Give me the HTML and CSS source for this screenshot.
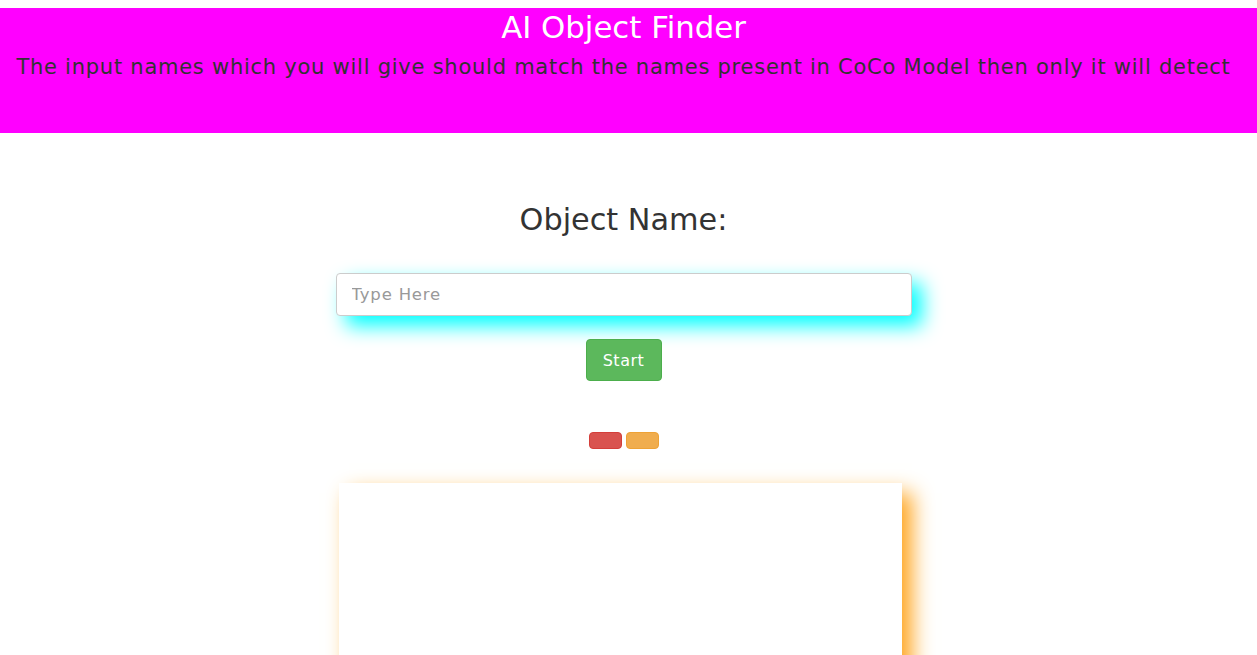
FILE: index.html
```html
<!DOCTYPE html>
<html>
<head>
<meta charset="utf-8">
<title>AI Object Finder</title>
<link rel="stylesheet" href="styles.css">
</head>
<body>
<header class="banner">
  <h1 class="banner-title">AI Object Finder</h1>
  <p class="banner-sub">The input names which you will give should match the names present in CoCo Model then only it will detect</p>
</header>
<main class="main">
  <h2 class="label">Object Name:</h2>
  <input class="name-input" type="text" placeholder="Type Here">
  <button class="btn-start">Start</button>
  <div class="mini-row">
    <button class="mini mini-red"></button>
    <button class="mini mini-orange"></button>
  </div>
  <div class="canvas"></div>
</main>
</body>
</html>
```
FILE: styles.css
```css
html, body {
  overflow: hidden;
}
body {
  margin: 8px 0 0;
  font-family: "DejaVu Sans", "Open Sans", sans-serif;
  background: #fff;
  color: #333;
}
.banner {
  background: #ff00ff;
  height: 125px;
  box-sizing: border-box;
  padding: 2px 10px 0 0;
  text-align: center;
}
.banner-title {
  margin: 0;
  font-size: 30.8px;
  font-weight: 400;
  line-height: 34px;
  color: #fff;
}
.banner-sub {
  margin: 10px 0 0;
  font-size: 21px;
  letter-spacing: 0.75px;
  line-height: 26px;
  color: #333;
  white-space: nowrap;
}
.main {
  display: flex;
  flex-direction: column;
  align-items: center;
  padding-right: 10px;
}
.label {
  margin: 69px 0 0;
  font-size: 30.3px;
  font-weight: 400;
  line-height: 36px;
  color: #333;
}
.name-input {
  margin-top: 35px;
  width: 576px;
  height: 43px;
  box-sizing: border-box;
  padding: 6px 15px;
  font-family: inherit;
  font-size: 16.5px;
  letter-spacing: 0.8px;
  color: #555;
  border: 1px solid #ccc;
  border-radius: 4px;
  box-shadow: 10px 10px 20px #00ffff;
  outline: none;
}
.name-input::placeholder {
  color: #999;
}
.btn-start {
  margin-top: 23px;
  width: 76px;
  height: 42px;
  box-sizing: border-box;
  padding: 0;
  font-family: inherit;
  font-size: 16px;
  letter-spacing: 0.5px;
  color: #fff;
  background: #5cb85c;
  border: 1px solid #4cae4c;
  border-radius: 4px;
}
.mini-row {
  margin-top: 51px;
  display: flex;
  gap: 4px;
}
.mini {
  width: 33px;
  height: 17px;
  box-sizing: border-box;
  padding: 0;
  border-radius: 4px;
}
.mini-red {
  background: #d9534f;
  border: 1px solid #d43f3a;
}
.mini-orange {
  background: #f0ad4e;
  border: 1px solid #eea236;
}
.canvas {
  margin: 34px 6px 0 0;
  width: 563px;
  height: 300px;
  background: #fff;
  box-shadow: 10px 10px 20px #ffa41c;
}
```
